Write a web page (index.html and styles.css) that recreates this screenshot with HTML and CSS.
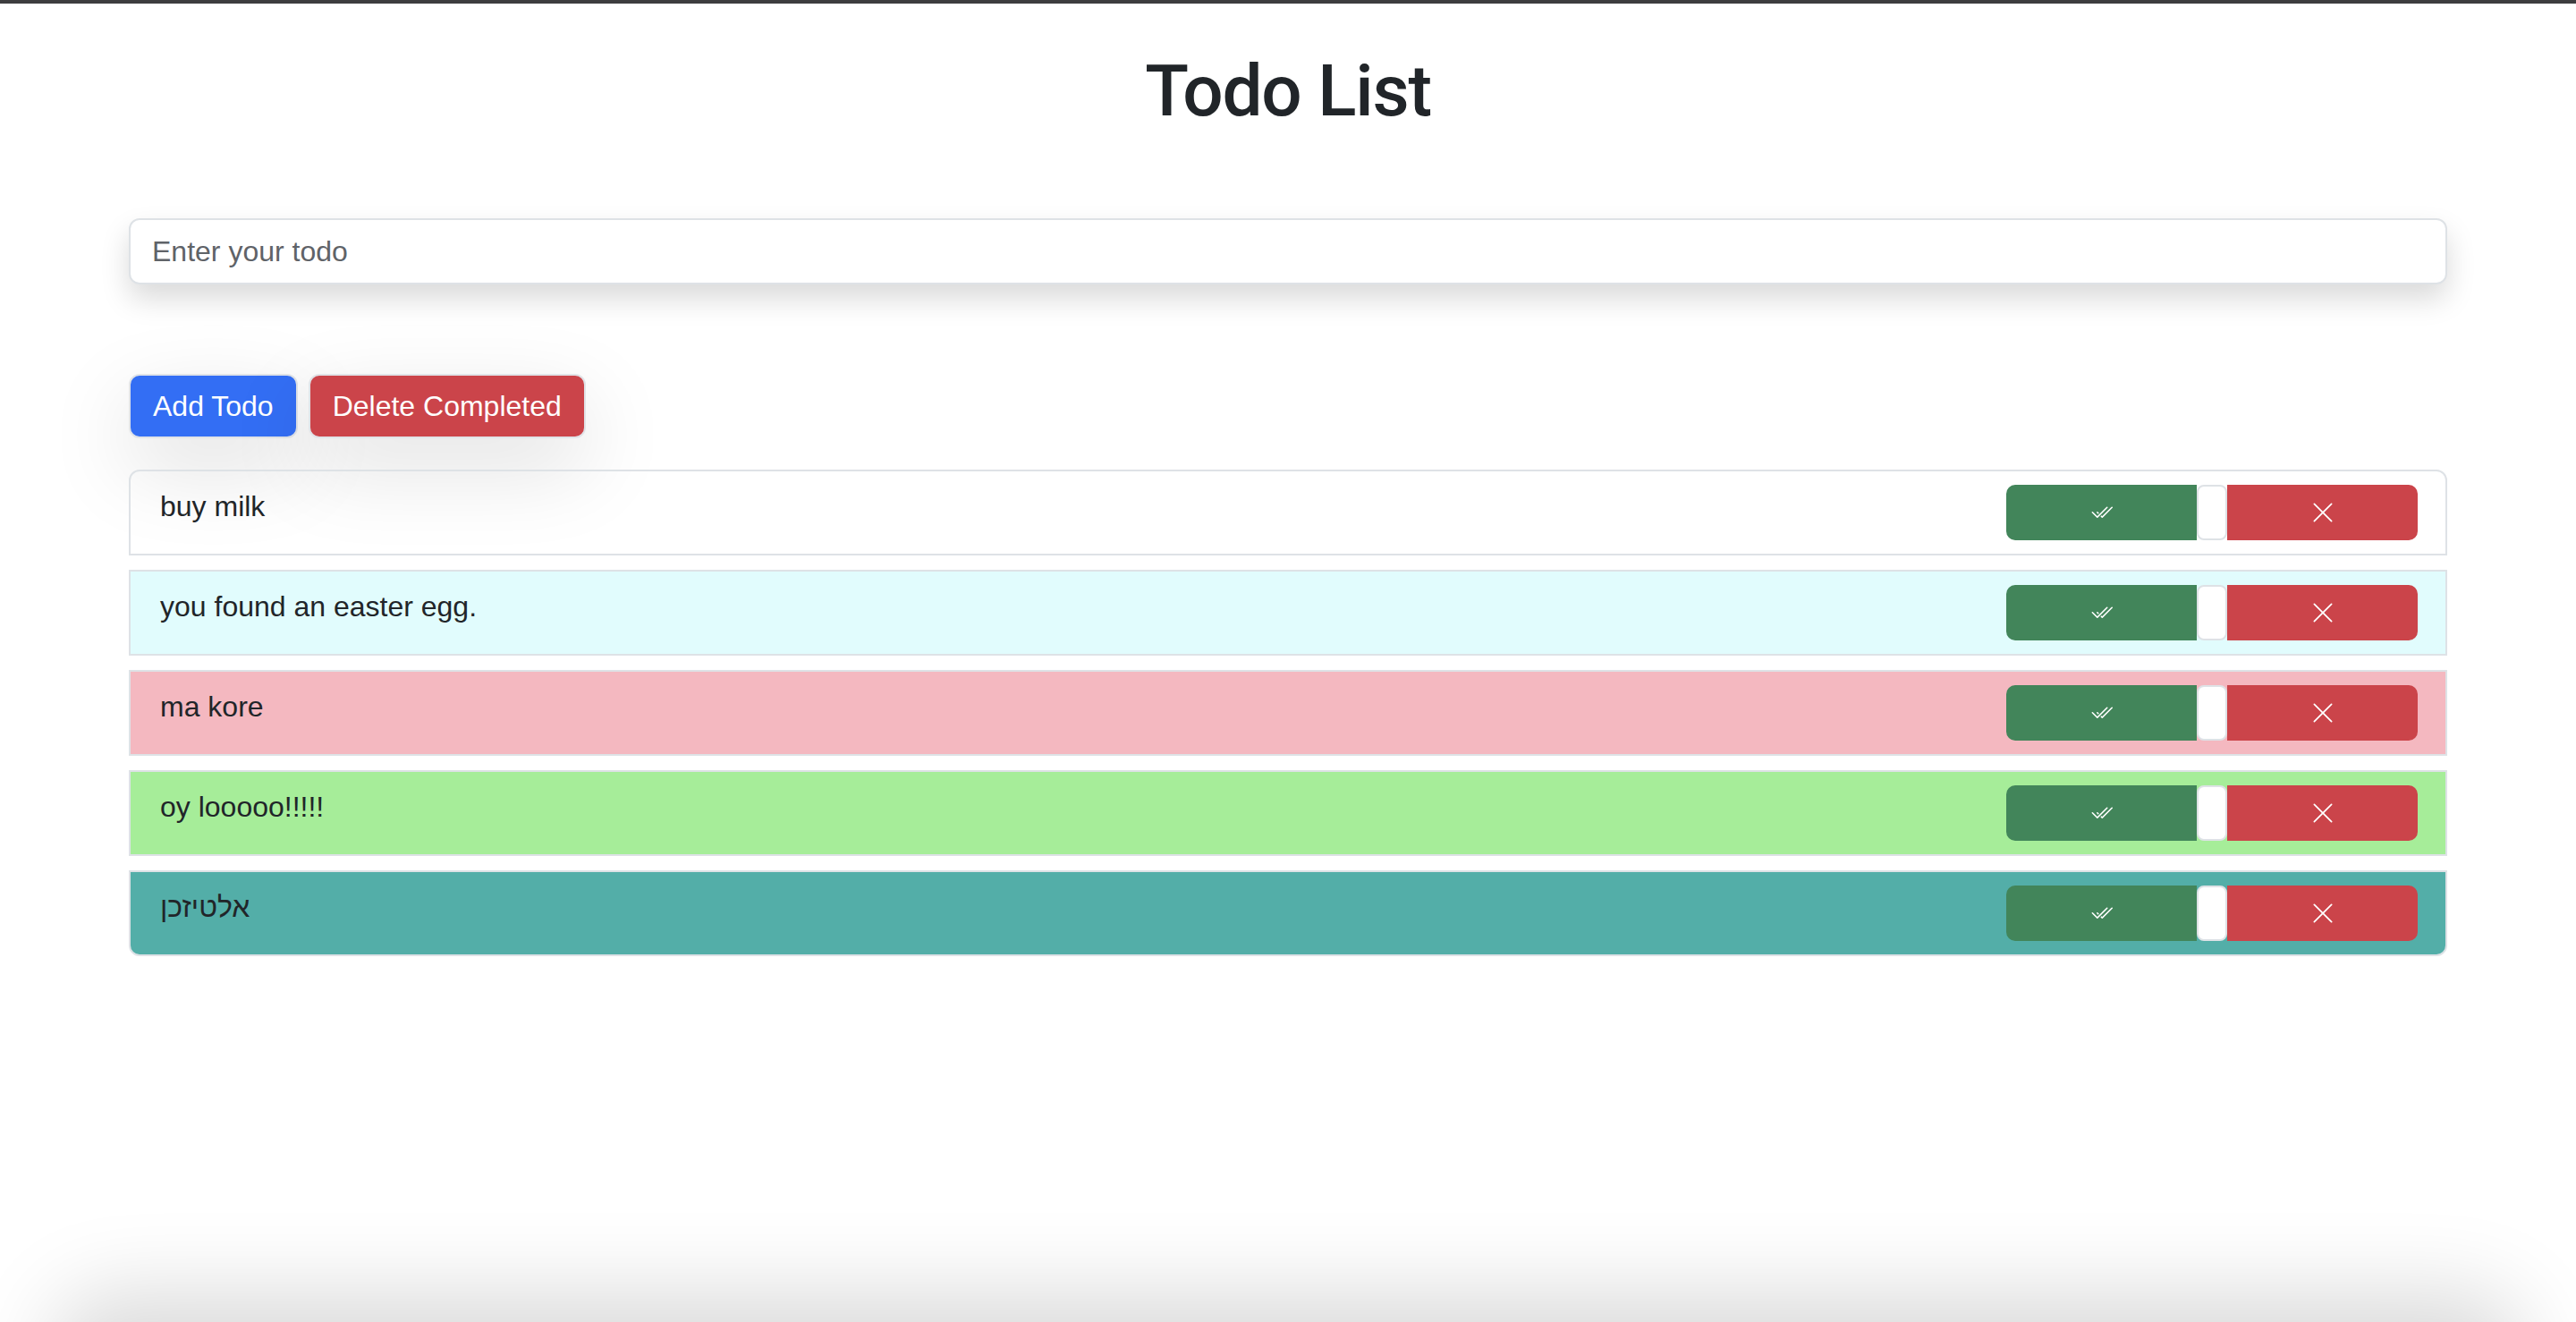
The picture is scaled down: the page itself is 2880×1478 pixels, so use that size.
FILE: index.html
```html
<!DOCTYPE html>
<html lang="en">
<head>
<meta charset="utf-8">
<title>Todo List</title>
<link rel="stylesheet" href="styles.css">
</head>
<body>
<div class="topbar"></div>
<main class="container">
  <h1 class="title">Todo List</h1>
  <input class="todo-input" type="text" placeholder="Enter your todo">
  <div class="actions">
    <button class="btn btn-primary">Add Todo</button>
    <button class="btn btn-danger">Delete Completed</button>
  </div>
  <ul class="todo-list">
    <li class="todo-item item-plain">
      <span class="todo-text">buy milk</span>
      <div class="todo-controls">
        <button class="ctl ctl-done"><svg viewBox="0 0 16 16" width="25" height="25" fill="currentColor"><path d="M12.354 4.354a.5.5 0 0 0-.708-.708L5 10.293 1.854 7.146a.5.5 0 1 0-.708.708l3.5 3.5a.5.5 0 0 0 .708 0zm-4.208 7-.896-.897.707-.707.543.543 6.646-6.647a.5.5 0 0 1 .708.708l-7 7a.5.5 0 0 1-.708 0"/><path d="m5.354 7.146.896.897-.707.707-.897-.896a.5.5 0 1 1 .708-.708"/></svg></button>
        <span class="ctl-check"></span>
        <button class="ctl ctl-del"><svg viewBox="0 0 16 16" width="28" height="28" fill="currentColor"><path d="M2.146 2.854a.5.5 0 1 1 .708-.708L8 7.293l5.146-5.147a.5.5 0 0 1 .708.708L8.707 8l5.147 5.146a.5.5 0 0 1-.708.708L8 8.707l-5.146 5.147a.5.5 0 0 1-.708-.708L7.293 8z"/></svg></button>
      </div>
    </li>
    <li class="todo-item item-cyan">
      <span class="todo-text">you found an easter egg.</span>
      <div class="todo-controls">
        <button class="ctl ctl-done"><svg viewBox="0 0 16 16" width="25" height="25" fill="currentColor"><path d="M12.354 4.354a.5.5 0 0 0-.708-.708L5 10.293 1.854 7.146a.5.5 0 1 0-.708.708l3.5 3.5a.5.5 0 0 0 .708 0zm-4.208 7-.896-.897.707-.707.543.543 6.646-6.647a.5.5 0 0 1 .708.708l-7 7a.5.5 0 0 1-.708 0"/><path d="m5.354 7.146.896.897-.707.707-.897-.896a.5.5 0 1 1 .708-.708"/></svg></button>
        <span class="ctl-check"></span>
        <button class="ctl ctl-del"><svg viewBox="0 0 16 16" width="28" height="28" fill="currentColor"><path d="M2.146 2.854a.5.5 0 1 1 .708-.708L8 7.293l5.146-5.147a.5.5 0 0 1 .708.708L8.707 8l5.147 5.146a.5.5 0 0 1-.708.708L8 8.707l-5.146 5.147a.5.5 0 0 1-.708-.708L7.293 8z"/></svg></button>
      </div>
    </li>
    <li class="todo-item item-pink">
      <span class="todo-text">ma kore</span>
      <div class="todo-controls">
        <button class="ctl ctl-done"><svg viewBox="0 0 16 16" width="25" height="25" fill="currentColor"><path d="M12.354 4.354a.5.5 0 0 0-.708-.708L5 10.293 1.854 7.146a.5.5 0 1 0-.708.708l3.5 3.5a.5.5 0 0 0 .708 0zm-4.208 7-.896-.897.707-.707.543.543 6.646-6.647a.5.5 0 0 1 .708.708l-7 7a.5.5 0 0 1-.708 0"/><path d="m5.354 7.146.896.897-.707.707-.897-.896a.5.5 0 1 1 .708-.708"/></svg></button>
        <span class="ctl-check"></span>
        <button class="ctl ctl-del"><svg viewBox="0 0 16 16" width="28" height="28" fill="currentColor"><path d="M2.146 2.854a.5.5 0 1 1 .708-.708L8 7.293l5.146-5.147a.5.5 0 0 1 .708.708L8.707 8l5.147 5.146a.5.5 0 0 1-.708.708L8 8.707l-5.146 5.147a.5.5 0 0 1-.708-.708L7.293 8z"/></svg></button>
      </div>
    </li>
    <li class="todo-item item-green">
      <span class="todo-text">oy looooo!!!!!</span>
      <div class="todo-controls">
        <button class="ctl ctl-done"><svg viewBox="0 0 16 16" width="25" height="25" fill="currentColor"><path d="M12.354 4.354a.5.5 0 0 0-.708-.708L5 10.293 1.854 7.146a.5.5 0 1 0-.708.708l3.5 3.5a.5.5 0 0 0 .708 0zm-4.208 7-.896-.897.707-.707.543.543 6.646-6.647a.5.5 0 0 1 .708.708l-7 7a.5.5 0 0 1-.708 0"/><path d="m5.354 7.146.896.897-.707.707-.897-.896a.5.5 0 1 1 .708-.708"/></svg></button>
        <span class="ctl-check"></span>
        <button class="ctl ctl-del"><svg viewBox="0 0 16 16" width="28" height="28" fill="currentColor"><path d="M2.146 2.854a.5.5 0 1 1 .708-.708L8 7.293l5.146-5.147a.5.5 0 0 1 .708.708L8.707 8l5.147 5.146a.5.5 0 0 1-.708.708L8 8.707l-5.146 5.147a.5.5 0 0 1-.708-.708L7.293 8z"/></svg></button>
      </div>
    </li>
    <li class="todo-item item-teal">
      <span class="todo-text">אלטיזכן</span>
      <div class="todo-controls">
        <button class="ctl ctl-done"><svg viewBox="0 0 16 16" width="25" height="25" fill="currentColor"><path d="M12.354 4.354a.5.5 0 0 0-.708-.708L5 10.293 1.854 7.146a.5.5 0 1 0-.708.708l3.5 3.5a.5.5 0 0 0 .708 0zm-4.208 7-.896-.897.707-.707.543.543 6.646-6.647a.5.5 0 0 1 .708.708l-7 7a.5.5 0 0 1-.708 0"/><path d="m5.354 7.146.896.897-.707.707-.897-.896a.5.5 0 1 1 .708-.708"/></svg></button>
        <span class="ctl-check"></span>
        <button class="ctl ctl-del"><svg viewBox="0 0 16 16" width="28" height="28" fill="currentColor"><path d="M2.146 2.854a.5.5 0 1 1 .708-.708L8 7.293l5.146-5.147a.5.5 0 0 1 .708.708L8.707 8l5.147 5.146a.5.5 0 0 1-.708.708L8 8.707l-5.146 5.147a.5.5 0 0 1-.708-.708L7.293 8z"/></svg></button>
      </div>
    </li>
  </ul>
</main>
<div class="bottom-shade"></div>
</body>
</html>
```
FILE: styles.css
```css
* { box-sizing: border-box; }

html, body {
  margin: 0;
  padding: 0;
  background: #ffffff;
}

body {
  font-family: "Liberation Sans", "DejaVu Sans", Arial, sans-serif;
  color: #212529;
  font-size: 32px;
  line-height: 48px;
  overflow: hidden;
  height: 1478px;
}

.topbar {
  height: 4px;
  background: #3d3d3f;
}

.container {
  width: 2640px;
  margin: 0 auto;
  padding: 0 24px;
  display: flex;
  flex-direction: column;
  align-items: stretch;
}

.title {
  margin: 50px 0 0;
  font-family: Roboto, "Liberation Sans", sans-serif;
  font-size: 80px;
  line-height: 96px;
  font-weight: 500;
  letter-spacing: -1.2px;
  text-align: center;
  color: #212529;
}

.todo-input {
  margin-top: 94px;
  height: 74px;
  width: 100%;
  padding: 11px 24px;
  font-family: inherit;
  font-size: 32px;
  line-height: 48px;
  color: #212529;
  background: #ffffff;
  border: 2px solid #dee2e6;
  border-radius: 12px;
  box-shadow: 0 16px 32px rgba(0, 0, 0, 0.15);
  outline: none;
}

.todo-input::placeholder {
  color: #5f6368;
}

.actions {
  margin-top: 100px;
  display: flex;
  gap: 12px;
}

.btn {
  height: 72px;
  padding: 10px 25px;
  font-family: inherit;
  font-size: 32px;
  line-height: 48px;
  color: #ffffff;
  border: 2px solid #e1e4e8;
  border-radius: 12px;
  box-shadow: 0 32px 96px rgba(0, 0, 0, 0.13);
}

.btn-primary { background: #336ef4; }
.btn-danger { background: #cb444a; }

.todo-list {
  list-style: none;
  margin: 35px 0 0;
  padding: 0;
  display: flex;
  flex-direction: column;
  gap: 16px;
}

.todo-item {
  height: 96px;
  display: flex;
  justify-content: space-between;
  align-items: flex-start;
  padding: 15px 32px;
  border: 2px solid #dee2e6;
}

.todo-item:first-child { border-radius: 12px 12px 0 0; }
.todo-item:last-child { border-radius: 0 0 12px 12px; }

.item-plain { background: transparent; }
.item-cyan { background: #e1fcfd; }
.item-pink { background: #f4b8c0; }
.item-green { background: #a6ed99; }
.item-teal { background: #53aea8; }

.todo-text {
  padding-left: 1px;
  line-height: 48px;
}

.todo-controls {
  display: flex;
  height: 62px;
  margin-right: -1px;
}

.ctl {
  width: 213px;
  height: 62px;
  padding: 0;
  border: none;
  color: #ffffff;
  display: flex;
  align-items: center;
  justify-content: center;
}

.ctl-done {
  background: #42855a;
  border-radius: 10px 0 0 10px;
}

.ctl-del {
  background: #cb444a;
  border-radius: 0 10px 10px 0;
}

.ctl-check {
  width: 34px;
  height: 62px;
  background: #ffffff;
  border: 2px solid #dee2e6;
  border-radius: 8px;
}

.bottom-shade {
  position: fixed;
  left: 60px;
  right: 60px;
  top: 1478px;
  height: 200px;
  border-radius: 60px;
  background: #ffffff;
  box-shadow: 0 -32px 96px rgba(0, 0, 0, 0.15);
}
```
